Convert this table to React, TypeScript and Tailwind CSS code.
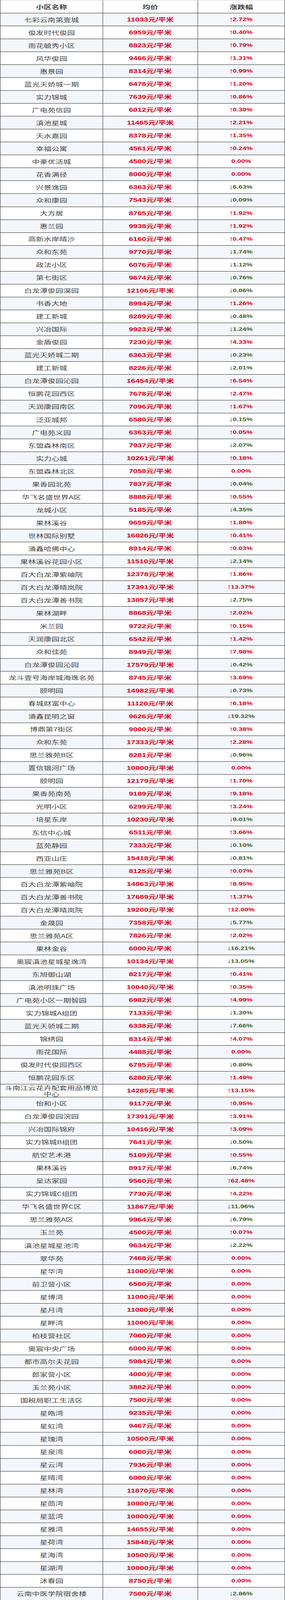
import React from 'react';

// [小区名称, 均价(元/平米), 涨跌幅(%)]
const rows: [string, number, number][] = [
    ['七彩云南第壹城', 11033, 2.72],
    ['俊发时代俊园', 6959, 0.4],
    ['雨花毓秀小区', 8823, 0.79],
    ['风华俊园', 9466, 1.31],
    ['惠景园', 8314, 0.99],
    ['蓝光天娇城一期', 6478, 1.2],
    ['实力锦城', 7639, 0.86],
    ['广电苑信园', 6012, 0.3],
    ['滇池星城', 11465, 2.21],
    ['天水嘉园', 8378, 1.35],
    ['幸福公寓', 4561, 0.24],
    ['中豪优活城', 4500, 0],
    ['花香满径', 8000, 0],
    ['兴景逸园', 6363, -6.63],
    ['众和康园', 7543, -0.09],
    ['大方居', 8705, 1.92],
    ['惠兰园', 9938, 1.92],
    ['高新水岸晴沙', 6160, 0.47],
    ['众和东苑', 9770, -1.74],
    ['政法小区', 6076, -1.12],
    ['第七街区', 9674, -0.76],
    ['白龙潭俊园淏园', 12106, -0.06],
    ['书香大地', 8994, 1.26],
    ['建工新城', 8289, -0.48],
    ['兴冶国际', 9923, -1.24],
    ['金盾俊园', 7230, 4.33],
    ['蓝光天娇城二期', 6363, -0.23],
    ['建工新城', 8226, -2.01],
    ['白龙潭俊园沁园', 16454, 6.54],
    ['恒鹏花园西区', 7678, 2.47],
    ['天润康园南区', 7096, 1.67],
    ['泛亚城邦', 6580, -0.15],
    ['广电苑义园', 6363, 0.05],
    ['东盟森林南区', 7937, -2.07],
    ['实力心城', 10261, 0.18],
    ['东盟森林北区', 7058, 0],
    ['果香园北苑', 7837, -0.04],
    ['华飞名盛世界A区', 8888, 0.55],
    ['龙城小区', 5185, -4.35],
    ['果林溪谷', 9659, 1.8],
    ['世林国际别墅', 16026, 0.41],
    ['涌鑫哈佛中心', 8914, 0.03],
    ['果林溪谷花园小区', 11510, -2.14],
    ['百大白龙潭紫岫院', 12378, 1.86],
    ['百大白龙潭晴岚院', 17391, 13.37],
    ['百大白龙潭善书院', 13057, -2.75],
    ['果林湖畔', 8868, 2.02],
    ['米兰园', 9722, 0.15],
    ['天润康园北区', 6542, 1.42],
    ['众和佳苑', 8949, 7.98],
    ['白龙潭俊园沁园', 17579, -0.42],
    ['龙斗壹号海岸城海逸名苑', 8745, 3.69],
    ['颐明园', 14982, -0.73],
    ['春城财富中心', 11120, 6.18],
    ['涌鑫昆明之窗', 9626, -19.32],
    ['博鼎第7街区', 9000, 0.38],
    ['众和东苑', 17333, 2.28],
    ['思兰雅苑B区', 8281, -0.96],
    ['置信银河广场', 10000, 0],
    ['颐明园', 12179, 1.7],
    ['果香苑南苑', 9189, 9.18],
    ['光明小区', 6299, 3.24],
    ['培星东岸', 10230, -9.01],
    ['东信中心城', 6511, 3.66],
    ['蓝苑静园', 7333, -0.1],
    ['西亚山庄', 15418, -0.81],
    ['思兰雅苑B区', 8125, 0.07],
    ['百大白龙潭紫岫院', 14063, 8.95],
    ['百大白龙潭善书院', 17689, 1.37],
    ['百大白龙潭晴岚院', 19200, 12.0],
    ['金晟园', 7358, -5.77],
    ['思兰雅苑A区', 7826, 2.02],
    ['果林金谷', 6000, -16.21],
    ['奥宸滇池星城星逸湾', 10134, -13.05],
    ['东旭御山湖', 8217, 0.41],
    ['滇池明珠广场', 10040, 0.35],
    ['广电苑小区一期智园', 6982, 4.99],
    ['实力锦城A组团', 7133, -1.3],
    ['蓝光天骄城二期', 6338, -7.66],
    ['锦绣园', 8314, 4.07],
    ['雨花国际', 4488, 0],
    ['俊发时代俊园西区', 6795, -0.8],
    ['恒鹏花园东区', 6280, 1.49],
    ['斗南江云花卉配套用品博览中心', 14285, 13.15],
    ['怡和小区', 9117, 0.95],
    ['白龙潭俊园浣园', 17391, 3.91],
    ['兴冶国际锦府', 10416, 3.09],
    ['实力锦城B组团', 7641, -0.5],
    ['航空艺术港', 5109, 0.55],
    ['果林溪谷', 8917, -6.74],
    ['呈达家园', 9560, 62.48],
    ['实力锦城C组团', 7730, 4.22],
    ['华飞名盛世界C区', 11867, -11.96],
    ['思兰雅苑A区', 9964, -6.79],
    ['玉兰苑', 4500, 0.07],
    ['滇池星城星池湾', 9634, -2.22],
    ['翠华苑', 7468, 0],
    ['星华湾', 11000, 0],
    ['前卫营小区', 6500, 0],
    ['星博湾', 11000, 0],
    ['星月湾', 11000, 0],
    ['星畔湾', 11000, 0],
    ['柏枝营社区', 7000, 0],
    ['奥宸中央广场', 6000, 0],
    ['都市高尔夫花园', 5984, 0],
    ['郎家营小区', 4000, 0],
    ['玉兰苑小区', 3882, 0],
    ['国税局职工生活区', 7500, 0],
    ['星皓湾', 9235, 0],
    ['星虹湾', 9467, 0],
    ['星瑰湾', 10500, 0],
    ['星泉湾', 6000, 0],
    ['星云湾', 7936, 0],
    ['星晴湾', 6000, 0],
    ['星林湾', 11870, 0],
    ['星茴湾', 10000, 0],
    ['星蓝湾', 10000, 0],
    ['星雅湾', 14655, 0],
    ['星荷湾', 15848, 0],
    ['星海湾', 10500, 0],
    ['星湖湾', 10000, 0],
    ['沐春园', 8750, 0],
    ['云南中医学院宿舍楼', 7500, -2.86],
];

const cjk = "font-['Noto_Sans_CJK_SC','Noto_Sans',sans-serif]";
const num = "font-['Liberation_Sans','Noto_Sans_CJK_SC',sans-serif]";

// the capture is squeezed into 4096px of height, so text is flattened to keep its shape
const squash = 'block scale-y-[0.688]';

function Arrow({ up }: { up: boolean }) {
    return (
        <svg width="6" height="15" viewBox="0 0 6 15" className="mr-px" fill="none" stroke="currentColor" strokeWidth="1.1">
            {up ? (
                <>
                    <path d="M3 1.5V15" />
                    <path d="M0.9 4.2L3 1.2L5.1 4.2" />
                </>
            ) : (
                <>
                    <path d="M3 0V13.5" />
                    <path d="M0.9 10.8L3 13.8L5.1 10.8" />
                </>
            )}
        </svg>
    );
}

function Change({ v }: { v: number }) {
    const down = v < 0;
    return (
        <span className={`flex items-center scale-y-[0.688] text-[18px] font-bold leading-[20px] ${num} ${down ? 'text-[#3f5f30]' : 'text-[#d7001c]'}`}>
            {v !== 0 && <Arrow up={!down} />}
            {Math.abs(v).toFixed(2)}%
        </span>
    );
}

export default function App() {
    return (
        <div className="w-[730px] h-[4096px] flex flex-col bg-white border-l border-r border-[#2a2a2a]">
            <div className="flex flex-1 min-h-0 border-t border-t-[#d5d5d5] border-b border-b-[#2a2a2a] bg-white">
                <div className={`w-[263px] shrink-0 border-r border-[#2a2a2a] flex items-center justify-center text-[20px] leading-[24px] font-bold text-[#3a3a3a] ${cjk}`}>
                    <span className={squash}>小区名称</span>
                </div>
                <div className={`w-[243px] shrink-0 border-r border-[#2a2a2a] flex items-center justify-center text-[20px] leading-[24px] font-bold text-[#3a3a3a] ${cjk}`}>
                    <span className={squash}>均价</span>
                </div>
                <div className={`flex-1 flex items-center justify-center text-[20px] leading-[24px] font-bold text-[#3a3a3a] ${cjk}`}>
                    <span className={squash}>涨跌幅</span>
                </div>
            </div>
            {rows.map(([name, price, pct], i) => (
                <div key={i} className={`flex flex-1 min-h-0 border-b border-[#2a2a2a] ${i % 2 === 0 ? 'bg-[#f3f6fa]' : 'bg-white'}`}>
                    <div className={`w-[263px] shrink-0 border-r border-[#2a2a2a] flex items-center justify-center px-[10px] text-center text-[20px] leading-[23px] text-[#444] ${cjk}`}>
                        <span className={squash}>{name}</span>
                    </div>
                    <div className={`w-[243px] shrink-0 border-r border-[#2a2a2a] flex items-center justify-center text-[20px] leading-[24px] font-bold text-[#d7001c] ${num}`}>
                        <span className={squash}>{price}元/平米</span>
                    </div>
                    <div className="flex-1 flex items-center justify-center">
                        <Change v={pct} />
                    </div>
                </div>
            ))}
        </div>
    );
}
